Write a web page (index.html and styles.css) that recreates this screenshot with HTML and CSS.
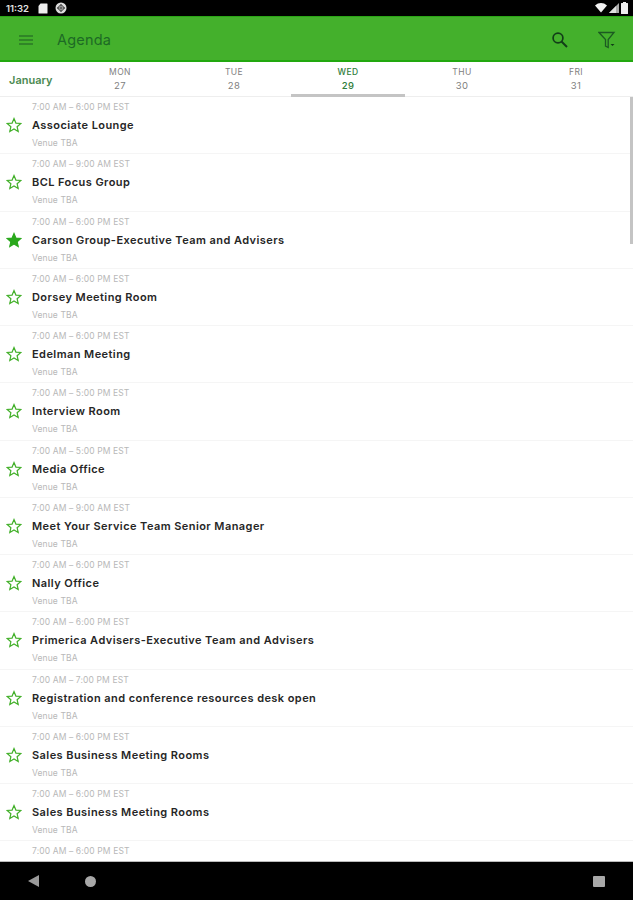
FILE: index.html
```html
<!DOCTYPE html>
<html lang="en">
<head>
<meta charset="utf-8">
<title>Agenda</title>
<link rel="stylesheet" href="styles.css">
</head>
<body>
<svg class="defs" width="0" height="0" aria-hidden="true">
  <defs>
    <path id="star" d="M8 1.6l1.9 4.5 4.9.4-3.7 3.2 1.1 4.8L8 12l-4.2 2.5 1.1-4.8L1.2 6.500l4.9-.4z"/>
  </defs>
</svg>
<div class="app">
  <div class="status">
    <div class="status-left">
      <span class="clock">11:32</span>
      <svg class="st-icon" width="10" height="11" viewBox="0 0 10 11"><path d="M2.500.5H9a.5.5 0 0 1 .5.5v9a.5.5 0 0 1-.5.500H1a.5.5 0 0 1-.5-.5V3z" fill="#eee"/></svg>
      <svg class="st-icon" width="12" height="12" viewBox="0 0 12 12"><circle cx="6" cy="6" r="5.500" fill="#ddd"/><path d="M2.500 6L6 2.500 9.500 6 6 9.500z" fill="none" stroke="#222" stroke-width="1"/><path d="M6 2.500V9.500M2.500 6h7" stroke="#222" stroke-width=".8"/></svg>
    </div>
    <div class="status-right">
      <svg width="12" height="10" viewBox="0 0 12 10"><path d="M0 2.500C3.500-.8 8.500-.8 12 2.500L6 9.500z" fill="#f2f2f2"/></svg>
      <svg width="10" height="10" viewBox="0 0 10 10"><path d="M10 0v10H0z" fill="#aaa"/><path d="M7 3v7H0z" fill="#e0e0e0"/></svg>
      <svg width="7" height="12" viewBox="0 0 7 12"><path d="M2 0h3v1h1.500a.5.5 0 0 1 .5.5V11.500a.5.5 0 0 1-.5.5H.5a.5.5 0 0 1-.5-.5V1.500A.5.5 0 0 1 .5 1H2z" fill="#eee"/></svg>
    </div>
  </div>
  <header class="toolbar">
    <svg class="menu" width="14" height="10" viewBox="0 0 14 10"><path d="M0 1h14M0 5h14M0 9h14" stroke="#1c5a22" stroke-width="1.200"/></svg>
    <h1 class="title">Agenda</h1>
    <svg class="search" width="18" height="18" viewBox="0 0 18 18"><circle cx="7" cy="7" r="4.900" fill="none" stroke="#123d18" stroke-width="1.700"/><path d="M10.500 10.500L16 16" stroke="#123d18" stroke-width="2"/></svg>
    <svg class="filter" width="18" height="18" viewBox="0 0 18 18"><path d="M1 1.500h15L10.200 8.500v8L7.500 15V8.500z" fill="none" stroke="#1c5a22" stroke-width="1.300"/><path d="M12.500 13h4l-2 2z" fill="#123d18"/></svg>
  </header>
  <nav class="days">
    <div class="month">January</div>
    <div class="day"><span class="dow">MON</span><span class="num">27</span></div>
    <div class="day"><span class="dow">TUE</span><span class="num">28</span></div>
    <div class="day active"><span class="dow">WED</span><span class="num">29</span></div>
    <div class="day"><span class="dow">THU</span><span class="num">30</span></div>
    <div class="day"><span class="dow">FRI</span><span class="num">31</span></div>
  </nav>
  <main class="list">
    <div class="thumb"></div>
    <article class="row"><svg class="star" viewBox="0 0 16 16"><use href="#star"/></svg><div class="info"><div class="time">7:00 AM – 6:00 PM EST</div><div class="name">Associate Lounge</div><div class="venue">Venue TBA</div></div></article>
    <article class="row"><svg class="star" viewBox="0 0 16 16"><use href="#star"/></svg><div class="info"><div class="time">7:00 AM – 9:00 AM EST</div><div class="name">BCL Focus Group</div><div class="venue">Venue TBA</div></div></article>
    <article class="row"><svg class="star on" viewBox="0 0 16 16"><use href="#star"/></svg><div class="info"><div class="time">7:00 AM – 6:00 PM EST</div><div class="name">Carson Group-Executive Team and Advisers</div><div class="venue">Venue TBA</div></div></article>
    <article class="row"><svg class="star" viewBox="0 0 16 16"><use href="#star"/></svg><div class="info"><div class="time">7:00 AM – 6:00 PM EST</div><div class="name">Dorsey Meeting Room</div><div class="venue">Venue TBA</div></div></article>
    <article class="row"><svg class="star" viewBox="0 0 16 16"><use href="#star"/></svg><div class="info"><div class="time">7:00 AM – 6:00 PM EST</div><div class="name">Edelman Meeting</div><div class="venue">Venue TBA</div></div></article>
    <article class="row"><svg class="star" viewBox="0 0 16 16"><use href="#star"/></svg><div class="info"><div class="time">7:00 AM – 5:00 PM EST</div><div class="name">Interview Room</div><div class="venue">Venue TBA</div></div></article>
    <article class="row"><svg class="star" viewBox="0 0 16 16"><use href="#star"/></svg><div class="info"><div class="time">7:00 AM – 5:00 PM EST</div><div class="name">Media Office</div><div class="venue">Venue TBA</div></div></article>
    <article class="row"><svg class="star" viewBox="0 0 16 16"><use href="#star"/></svg><div class="info"><div class="time">7:00 AM – 9:00 AM EST</div><div class="name">Meet Your Service Team Senior Manager</div><div class="venue">Venue TBA</div></div></article>
    <article class="row"><svg class="star" viewBox="0 0 16 16"><use href="#star"/></svg><div class="info"><div class="time">7:00 AM – 6:00 PM EST</div><div class="name">Nally Office</div><div class="venue">Venue TBA</div></div></article>
    <article class="row"><svg class="star" viewBox="0 0 16 16"><use href="#star"/></svg><div class="info"><div class="time">7:00 AM – 6:00 PM EST</div><div class="name">Primerica Advisers-Executive Team and Advisers</div><div class="venue">Venue TBA</div></div></article>
    <article class="row"><svg class="star" viewBox="0 0 16 16"><use href="#star"/></svg><div class="info"><div class="time">7:00 AM – 7:00 PM EST</div><div class="name">Registration and conference resources desk open</div><div class="venue">Venue TBA</div></div></article>
    <article class="row"><svg class="star" viewBox="0 0 16 16"><use href="#star"/></svg><div class="info"><div class="time">7:00 AM – 6:00 PM EST</div><div class="name">Sales Business Meeting Rooms</div><div class="venue">Venue TBA</div></div></article>
    <article class="row"><svg class="star" viewBox="0 0 16 16"><use href="#star"/></svg><div class="info"><div class="time">7:00 AM – 6:00 PM EST</div><div class="name">Sales Business Meeting Rooms</div><div class="venue">Venue TBA</div></div></article>
    <article class="row last"><div class="info"><div class="time">7:00 AM – 6:00 PM EST</div></div></article>
  </main>
  <footer class="navbar">
    <svg class="back" width="11" height="12" viewBox="0 0 11 12"><path d="M11 0v12L0 6z" fill="#9a9a9a"/></svg>
    <span class="home"></span>
    <span class="recent"></span>
  </footer>
</div>
</body>
</html>
```
FILE: styles.css
```css
* { box-sizing: border-box; }
html, body { margin: 0; height: 100%; background: #fff; }
body { font-family: "Inter", "Liberation Sans", sans-serif; overflow: hidden; }
.defs { position: absolute; }
.app { display: flex; flex-direction: column; height: 900px; width: 633px; }

.status { flex: 0 0 16px; background: #000; display: flex; align-items: center; justify-content: space-between; padding: 0 5px 0 6px; }
.status-left, .status-right { display: flex; align-items: center; }
.status-left { gap: 7px; }
.status-right { gap: 2px; }
.clock { color: #e4e4e4; font-size: 9.500px; font-weight: 600; width: 25px; }

.toolbar { flex: 0 0 46px; background: #44b02c; border-top: 1px solid #2aa515; border-bottom: 2px solid #22a80f; display: flex; align-items: center; padding: 2px 17px 0 19px; }
.title { margin: 0 0 0 24px; flex: 1; font-size: 14.500px; font-weight: 400; color: #1d6a25; letter-spacing: .2px; }
.search { margin-right: 29px; }

.days { flex: 0 0 35px; display: grid; grid-template-columns: 63px repeat(5, 114px); border-bottom: 1px solid #eee; background: #fff; }
.month { font-size: 11px; font-weight: 600; color: #4b8a52; padding: 11px 0 0 9px; }
.day { display: flex; flex-direction: column; align-items: center; padding-top: 5px; gap: 3px; font-size: 8.500px; color: #808080; letter-spacing: .4px; margin-bottom: -1px; border-bottom: 3px solid transparent; }
.day.active { color: #2f7d3a; border-bottom-color: #c4c4c4; font-weight: 500; }
.num { font-size: 9.500px; }

.list { flex: 1; min-height: 0; overflow: hidden; position: relative; border-bottom: 1px solid #bbb; }
.thumb { position: absolute; right: 0; top: 0; width: 3px; height: 147px; background: #c4c4c4; }
.row { height: 57.250px; display: flex; border-bottom: 1px solid #f5f5f5; padding-left: 6px; }
.row.last { border-bottom: 0; padding-left: 22px; }
.star { width: 16px; height: 16px; margin-top: 20px; fill: none; stroke: #43b02a; stroke-width: 1.200; flex: none; }
.star.on { fill: #2aa81c; stroke: #2aa81c; }
.info { margin-left: 10px; padding-top: 5px; }
.time { font-size: 8.500px; line-height: 11px; color: #b8b8b8; letter-spacing: .12px; }
.name { font-size: 11px; line-height: 14px; font-weight: 600; color: #262626; margin-top: 5px; letter-spacing: .43px; white-space: nowrap; }
.venue { font-size: 8.500px; line-height: 11px; color: #b8b8b8; margin-top: 6px; letter-spacing: .1px; }

.navbar { flex: 0 0 38px; background: #000; display: flex; align-items: center; padding: 0 28px; }
.home { width: 11px; height: 11px; border-radius: 50%; background: #a8a8a8; margin-left: 46px; }
.recent { width: 12px; height: 11px; border-radius: 1px; background: #a8a8a8; margin-left: auto; }
```
